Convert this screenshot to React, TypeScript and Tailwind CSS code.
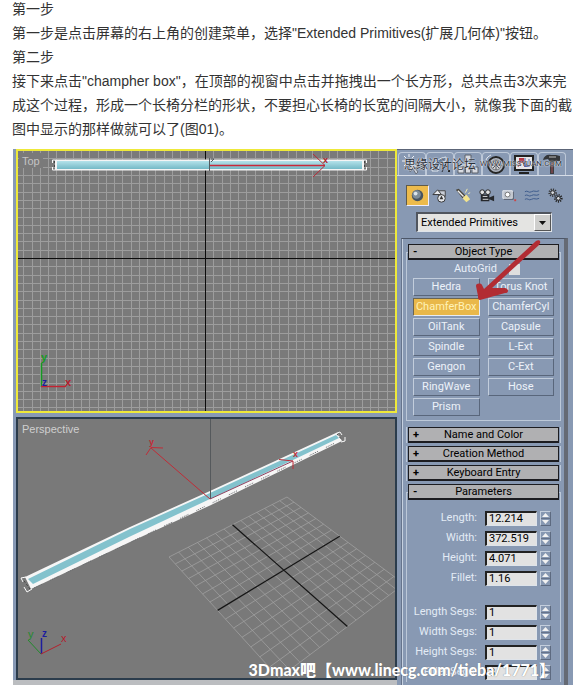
import React from 'react';

const primitives = [
  'Hedra', 'Torus Knot',
  'ChamferBox', 'ChamferCyl',
  'OilTank', 'Capsule',
  'Spindle', 'L-Ext',
  'Gengon', 'C-Ext',
  'RingWave', 'Hose',
  'Prism',
];

const sizeFields = [
  { id: 'length', label: 'Length:', value: '12.214' },
  { id: 'width', label: 'Width:', value: '372.519' },
  { id: 'height', label: 'Height:', value: '4.071' },
  { id: 'fillet', label: 'Fillet:', value: '1.16' },
];

const segmentFields = [
  { id: 'length-segs', label: 'Length Segs:', value: '1' },
  { id: 'width-segs', label: 'Width Segs:', value: '1' },
  { id: 'height-segs', label: 'Height Segs:', value: '1' },
  { id: 'fillet-segs', label: 'Fillet Segs:', value: '3' },
];

// Maps the unit square to the ground plane seen in perspective
const project = (u: number, v: number) => {
  const w = 1 + 0.1642 * u - 0.2097 * v;
  const x = (165.1 * u + 51.5 * v + 169) / w;
  const y = (21.6 * u - 21.2 * v + 557) / w;
  return `${x.toFixed(1)} ${y.toFixed(1)}`;
};

const steps = Array.from({ length: 15 }, (_, i) => i);
const offsets = Array.from({ length: 45 }, (_, i) => i - 22);

const TopScene = () => (
  <svg viewBox="18 151 377 260" className="block w-full h-auto" aria-hidden="true">
    <defs>
      <linearGradient id="bar" x1="0" y1="0" x2="0" y2="1">
        <stop offset="0" stopColor="#b4e2ea" />
        <stop offset="1" stopColor="#74b9c6" />
      </linearGradient>
    </defs>
    <rect x="18" y="151" width="377" height="260" fill="#7a7a7a" />
    <g stroke="#9d9d9d" strokeWidth="1">
      {offsets.map((k) => (
        <line key={`v${k}`} x1={205.5 + Math.round(k * 8.26)} x2={205.5 + Math.round(k * 8.26)} y1="151" y2="411" />
      ))}
      {offsets.map((k) => (
        <line key={`h${k}`} x1="18" x2="395" y1={258.5 + Math.round(k * 8.3)} y2={258.5 + Math.round(k * 8.3)} />
      ))}
    </g>
    <path d="M18 258.500H395M205.500 151V411" stroke="#0c0c0c" />
    <rect x="19" y="153" width="24" height="15" fill="#7a7a7a" />
    <rect x="55" y="159.500" width="309" height="11" fill="#f4f4f4" />
    <rect x="57" y="161" width="305" height="8" fill="url(#bar)" />
    <path d="M55 160H52.500V163M52.500 167V170H55M364 160H366.500V163M366.500 167V170H364" stroke="#f8f8f8" fill="none" />
    <path d="M54.500 161V169M364.500 161V169" stroke="#444" strokeDasharray="2 2" />
    <path d="M209.500 158V171M211 162l3-3M211 159h3" stroke="#555b60" fill="none" />
    <path d="M210 165.500H325" stroke="#c8283a" strokeWidth="1.400" />
    <path d="M313 154L325 165.500L313 177" stroke="#b92b38" fill="none" />
    <text x="323" y="163" fontSize="9" fontWeight="bold" fill="#b01c28">x</text>
    <path d="M41.500 363V387" stroke="#159a22" strokeWidth="1.500" />
    <path d="M41 386.500H66" stroke="#c42231" strokeWidth="1.400" />
    <text x="41" y="361" fontSize="11" fontWeight="bold" fill="#159a22">y</text>
    <text x="42" y="386" fontSize="10" fontWeight="bold" fill="#1c1c9c">z</text>
    <text x="65" y="386" fontSize="11" fontWeight="bold" fill="#b5202c">x</text>
  </svg>
);

const PerspectiveScene = () => (
  <svg viewBox="18 419 377 259" className="block w-full h-auto" aria-hidden="true">
    <rect x="18" y="419" width="377" height="259" fill="#797979" />
    <g stroke="#a0a0a0" strokeWidth="0.8" fill="none">
      {steps.map((i) => (
        <path key={`u${i}`} d={`M${project(i / 14, 0)}L${project(i / 14, 1)}`} />
      ))}
      {steps.map((i) => (
        <path key={`v${i}`} d={`M${project(0, i / 14)}L${project(1, i / 14)}`} />
      ))}
    </g>
    <path d={`M${project(0.5, 0)}L${project(0.5, 1)}M${project(0, 0.5)}L${project(1, 0.5)}`} stroke="#151515" strokeWidth="1.300" />
    <path d="M25 577L130 527L210 491L337 432.500L342 441L210 505.500L130 542L31 589Z" fill="#f6f6f6" />
    <path d="M28 579L130 529L210 493L336 435L339 438L293 460L210 499L130 536.500L33 584Z" fill="#83c2cd" />
    <path d="M34 588L130 542.500L210 504L335 443" stroke="#66696c" strokeDasharray="1 1 1 1 1 1 1 1 1 9" fill="none" />
    <path d="M26 577L21 578L23 582M24 587L27 592L32 589M337 433L340 432L342 435M345 437L345 441L341 442" stroke="#fafafa" fill="none" />
    <path d="M24 581L30 589M337 434L342 440" stroke="#444" strokeDasharray="2 2" />
    <path d="M210.500 419V499" stroke="#55595c" />
    <path d="M210 499L151 448M146 455L151 447.500L163 448" stroke="#c02c37" fill="none" />
    <path d="M210 499L293 461" stroke="#8f4260" fill="none" />
    <path d="M279 459.500L293 461V469" stroke="#c02c37" fill="none" />
    <text x="149" y="445" fontSize="9" fontWeight="bold" fill="#c02c37">y</text>
    <text x="293" y="457" fontSize="9" fontWeight="bold" fill="#c02c37">x</text>
    <path d="M41 654L28 640" stroke="#228a2c" />
    <path d="M41.500 654V638" stroke="#1d1d9e" strokeWidth="1.500" />
    <path d="M41 654L61 644" stroke="#b5202c" />
    <text x="28" y="638" fontSize="11" fill="#228a2c">y</text>
    <text x="42" y="637" fontSize="10" fontWeight="bold" fill="#1d1d9e">z</text>
    <text x="61" y="642" fontSize="11" fill="#b5202c">x</text>
  </svg>
);

const tabs = [
  {
    name: 'Create',
    icon: (
      <>
        <path d="M8 6l10 8-4 1 3 4-2 2-3-5-3 3z" fill="#c6ccd6" stroke="#6a707b" />
        <path d="M8 1v3M3 3l2 2M1 8h4M13 3l-2 2M3 13l2-2" stroke="#f0f2f5" />
      </>
    ),
  },
  {
    name: 'Modify',
    icon: (
      <>
        <path d="M3 18C4 9 10 5 17 4v4c-5 1-8 4-8 10z" fill="#5d7694" stroke="#dfe5ed" />
        <path d="M13 19L19 6M11 11l8 3M4 14h5" stroke="#2b2e35" />
        <path d="M19 18h2" stroke="#222" strokeWidth="2" />
      </>
    ),
  },
  {
    name: 'Hierarchy',
    icon: (
      <>
        <path d="M11 8v4M4 15v-3h14v3M11 12v3" stroke="#eee" />
        <path d="M8 2h6v6H8zM1 14h6v6H1zM8.500 14h5v6h-5zM15 14h6v6h-6z" fill="#d7d9df" stroke="#5b606b" />
      </>
    ),
  },
  {
    name: 'Motion',
    icon: (
      <>
        <circle cx="11" cy="12" r="8" fill="#aeb4bf" stroke="#252525" strokeWidth="2" />
        <circle cx="11" cy="12" r="5" fill="#d2d3d6" stroke="#777" />
        <path d="M11 7v10M6 12h10M8 9l6 6M14 9l-6 6" stroke="#55585f" />
        <path d="M1 7c1-3 3-4 5-5" stroke="#e8ebf0" />
      </>
    ),
  },
  {
    name: 'Display',
    icon: (
      <>
        <path d="M2 3h18v14H2z" fill="#e6e6e8" stroke="#222" strokeWidth="2" />
        <path d="M6 5h5v5H6z" fill="#b73845" />
        <path d="M11 7l5 7h-5z" fill="#4963a9" />
        <path d="M5 14l4-8 3 8" stroke="#b73845" />
        <path d="M12 5v9M16 6v8" stroke="#4963a9" />
        <path d="M6 20h10" stroke="#222" strokeWidth="2" />
      </>
    ),
  },
  {
    name: 'Utilities',
    icon: (
      <>
        <path d="M2 7c1-4 4-6 8-5h5l4 1v5h-5l-1 1H9L7 6z" fill="#34363a" />
        <path d="M9 9h4v12H9z" fill="#3d3e42" />
        <path d="M11 10v10" stroke="#a34a50" />
        <path d="M8 4h7" stroke="#bbb" />
      </>
    ),
  },
];

const categories = [
  {
    name: 'Geometry',
    icon: (
      <>
        <circle cx="10" cy="10" r="6" fill="#46535f" />
        <circle cx="9" cy="9" r="4.500" fill="#7d8d9a" />
        <circle cx="8" cy="8" r="2" fill="#dbe5eb" />
      </>
    ),
  },
  {
    name: 'Shapes',
    icon: (
      <>
        <path d="M8 5h7v6H8z" fill="#c9ced7" stroke="#444" />
        <path d="M2 9l5-5 4 5z" fill="#e8eaee" stroke="#333" />
        <circle cx="11" cy="13" r="4" fill="#e8eaee" stroke="#333" />
        <path d="M9 14l2-4 2 4z" fill="#333" />
      </>
    ),
  },
  {
    name: 'Lights',
    icon: (
      <>
        <path d="M2 4l3-1 7 7-3 3z" fill="#48443a" />
        <path d="M4 5l6 6" stroke="#eee" strokeWidth="1.500" />
        <path d="M9 13l4-4 4 5-4 3z" fill="#f3e38c" />
        <path d="M12 7l2-4M15 8l2-1" stroke="#f7edaa" />
      </>
    ),
  },
  {
    name: 'Cameras',
    icon: (
      <>
        <path d="M4 9h9v7H4zM13 12l5-2v6l-5-2z" fill="#26282c" />
        <circle cx="5.500" cy="6.500" r="2.500" fill="#e5e5e5" stroke="#222" />
        <circle cx="11.500" cy="6.500" r="2.500" fill="#e5e5e5" stroke="#222" />
        <path d="M6 11h5M6 14h6" stroke="#ddd" />
      </>
    ),
  },
  {
    name: 'Helpers',
    icon: (
      <>
        <path d="M3 5h10v8H3z" fill="#bcc1cb" stroke="#eceef2" />
        <circle cx="8" cy="9" r="2.500" fill="#fff" stroke="#777" />
        <path d="M4 14h10V6" stroke="#555b66" />
        <path d="M15 15h2" stroke="#c44" strokeWidth="2" />
      </>
    ),
  },
  {
    name: 'Space Warps',
    icon: (
      <path d="M2 6c3-2 4 2 7 0s4 1 8-1M2 10c3-2 4 2 7 0s4 1 8-1M2 14c3-2 4 2 7 0s4 1 8-1" stroke="#3c5a8b" />
    ),
  },
  {
    name: 'Systems',
    icon: (
      <>
        <circle cx="7" cy="7" r="3" stroke="#333" strokeWidth="3" strokeDasharray="1 1" />
        <circle cx="7" cy="7" r="2" fill="#d5d8de" stroke="#333" />
        <circle cx="13" cy="13" r="3" stroke="#222" strokeWidth="3" strokeDasharray="1 1" />
        <circle cx="13" cy="13" r="2" fill="#d5d8de" stroke="#222" />
      </>
    ),
  },
];

const RolloutHeader = ({ title, open = false }: { title: string; open?: boolean }) => (
  <button
    type="button"
    aria-expanded={open}
    className="relative z-10 block w-full h-4 border border-[#1c1c20] border-b-2 bg-[#b0b0b2] text-center leading-[13px] text-black"
  >
    <span className="absolute left-1 font-bold">{open ? '-' : '+'}</span>
    {title}
  </button>
);

const Field = ({ id, label, value }: { id: string; label: string; value: string }) => (
  <div className="flex h-5 items-center justify-end pr-[9px]">
    <label htmlFor={id} className="mr-2 text-[#e3ebf5]">{label}</label>
    <input
      id={id}
      defaultValue={value}
      className="w-[52px] h-[15px] border border-t-2 border-l-2 border-[#dfe4ea] border-t-[#222] border-l-[#222] bg-[#e2e2e2] pl-[2px] text-[11px] leading-3 text-black outline-none"
    />
    <button type="button" aria-label={`Adjust ${id}`} className="ml-[3px] w-[11px] h-[15px] border border-[#c3cedd] border-b-[#5d6a80] border-r-[#5d6a80] bg-[#8798b2]">
      <svg viewBox="0 0 9 13" className="block w-full h-full">
        <path d="M1 5L4.500 1L8 5ZM1 8L4.500 12L8 8Z" fill="#f2f2f2" />
        <path d="M0 6.500H9" stroke="#66738a" />
      </svg>
    </button>
  </div>
);

const CommandPanel = () => (
  <aside className="relative flex w-[176px] shrink-0 flex-col overflow-hidden border-t border-[#5c6577] bg-[#8899b3] font-['Roboto','Liberation_Sans',sans-serif] text-[11px]">
    <div className="relative mt-[2px] flex h-6 border-b border-[#d5dce7] pl-px">
      {tabs.map((tab) => (
        <button
          key={tab.name}
          type="button"
          aria-label={tab.name}
          className="flex w-7 items-center justify-center rounded-t-sm border border-b-0 border-[#bdc8d8]"
        >
          <svg viewBox="0 0 22 22" fill="none" className="w-[22px] h-[22px]">{tab.icon}</svg>
        </button>
      ))}
      <div className="pointer-events-none absolute inset-y-0 left-[7px] flex items-center whitespace-nowrap text-[#2b3038] [text-shadow:0_0_1px_#fff,0_0_2px_#e8edf5]">
        <span className="font-['Noto_Sans_CJK_SC',sans-serif] text-xs">思缘设计论坛</span>
        <span className="ml-1 text-[8px]">WWW.MISSYUAN.COM</span>
      </div>
    </div>

    <div className="mt-[9px] flex pl-[9px]">
      {categories.map((category, index) => (
        <button
          key={category.name}
          type="button"
          aria-label={category.name}
          className={`flex h-[21px] w-[23px] items-center justify-center ${
            index === 0 ? 'border border-[#5f5a48] border-b-[#eef] border-r-[#eef] bg-[#edbb4c]' : ''
          }`}
        >
          <svg viewBox="0 0 20 20" fill="none" className="w-[19px] h-[19px]">{category.icon}</svg>
        </button>
      ))}
    </div>

    <div className="relative mt-[6px] ml-[19px] mr-[21px]">
      <select
        aria-label="Object category"
        className="block w-full h-5 appearance-none border border-t-2 border-l-2 border-[#dfe4ea] border-t-[#50555e] border-l-[#50555e] bg-[#e4e4e2] pl-[3px] text-[11px] leading-4 text-black"
      >
        <option>Extended Primitives</option>
      </select>
      <span className="pointer-events-none absolute right-px top-[2px] bottom-px flex w-[17px] items-center justify-center border border-white border-b-[#555] border-r-[#555] bg-[#cfcfcd]">
        <svg viewBox="0 0 7 4" className="w-[7px] h-1"><path d="M0 0H7L3.500 4Z" fill="#111" /></svg>
      </span>
    </div>

    <div className="mt-[6px] ml-1 mr-[5px] flex-1 border-t border-l border-t-[#4c5668] border-l-[#66748c] border-r-4 border-r-[#656a74]">
      <div className="h-full border-l border-[#c5d0df] pl-[3px] pr-[3px] pt-[5px]">
        <section>
          <div className="px-[2px]"><RolloutHeader title="Object Type" open /></div>
          <div className="-mt-2 border border-[#bcc8d8] px-[6px] pb-1 pt-[7px]">
            <label className="flex h-[18px] items-center justify-end gap-3 pr-[34px] text-[11px] text-[#e8eff8]">
              AutoGrid
              <input type="checkbox" className="h-[11px] w-[11px] appearance-none bg-[#dedede]" />
            </label>
            <div className="grid grid-cols-2 gap-x-2 gap-y-[2px]">
              {primitives.map((name) => (
                <button
                  key={name}
                  type="button"
                  className={`h-[18px] whitespace-nowrap border text-[11px] leading-4 ${
                    name === 'ChamferBox'
                      ? 'border-[#6a6553] border-b-[#e6ecf4] border-r-[#e6ecf4] bg-[#e9b84a] text-[#fff3b8]'
                      : 'border-[#c2cddc] border-b-[#59667b] border-r-[#59667b] text-[#edf2f9]'
                  }`}
                >
                  {name}
                </button>
              ))}
            </div>
          </div>
        </section>

        <div className="mt-[6px] flex flex-col gap-[3px]">
          {['Name and Color', 'Creation Method', 'Keyboard Entry'].map((title) => (
            <div key={title} className="border-x border-[#bcc8d8] px-px">
              <RolloutHeader title={title} />
            </div>
          ))}
        </div>

        <section className="mt-[3px]">
          <div className="px-[2px]"><RolloutHeader title="Parameters" open /></div>
          <div className="-mt-2 border border-b-0 border-[#bcc8d8] pt-[15px]">
            {sizeFields.map((field) => <Field key={field.id} {...field} />)}
            <div className="mt-[14px]">
              {segmentFields.map((field) => <Field key={field.id} {...field} />)}
            </div>
          </div>
        </section>
      </div>
    </div>

    <svg viewBox="0 0 68 62" className="pointer-events-none absolute left-[78px] top-[89px] z-20 w-[68px] h-[62px]" aria-hidden="true">
      <path d="M61 2C64 0 67 2 64 6L17 49L30 49C34 50 34 54 30 54L5 61C3 61 3 59 3 57L1 47C1 44 6 44 7 46L9 50Z" fill="#b22c33" />
    </svg>
  </aside>
);

const App = () => {
  return (
    <main className="bg-white font-['Liberation_Sans','Noto_Sans_CJK_SC',sans-serif]">
      <article className="-mt-[3px] pl-3 text-sm leading-6 text-[#333]">
        <p>第一步</p>
        <p>第一步是点击屏幕的右上角的创建菜单，选择"Extended Primitives(扩展几何体)"按钮。</p>
        <p>第二步</p>
        <p>
          接下来点击"champher box"，在顶部的视窗中点击并拖拽出一个长方形，总共点击3次来完成这个过程，形成一个长椅分栏的形状，不要担心长椅的长宽的间隔大小，就像我下面的截图中显示的那样做就可以了(图01)。
        </p>
      </article>

      <figure className="relative mt-2 ml-[13px] mr-[2px] flex">
        <div className="flex min-w-0 flex-1 flex-col bg-[#8799b5]">
          <div className="relative ml-[3px] border-2 border-[#eee93a]">
            <TopScene />
            <span className="absolute left-1 top-[2px] text-[11px] leading-4 text-[#c4c4c4]">Top</span>
          </div>
          <div className="relative ml-[3px] mt-1 border-2 border-[#2b3c4c]">
            <PerspectiveScene />
            <span className="absolute left-1 top-[2px] text-[11px] leading-4 text-[#cfcfcf]">Perspective</span>
          </div>
          <div className="h-[5px] bg-[#bbbdc0]" />
        </div>
        <CommandPanel />
        <figcaption className="absolute bottom-[5px] right-[18px] z-20 whitespace-nowrap font-['Lato','Noto_Sans_CJK_SC',sans-serif] text-base font-black leading-5 text-white [text-shadow:0_0_1px_#666]">
          3Dmax吧【www.linecg.com/tieba/1771】
        </figcaption>
      </figure>
    </main>
  );
};

export default App;
